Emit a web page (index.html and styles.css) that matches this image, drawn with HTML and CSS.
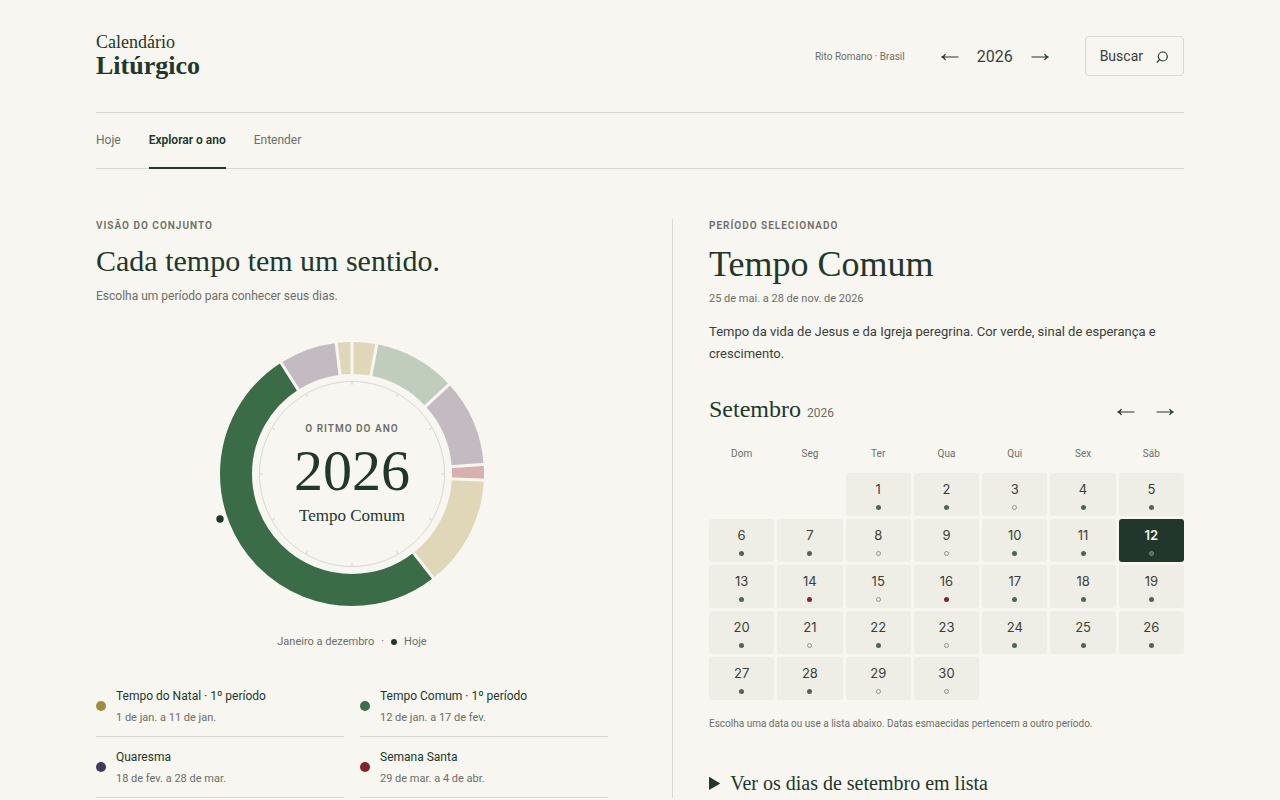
FILE: index.html
```html
<!DOCTYPE html>
<html lang="pt-BR">
<head>
<meta charset="utf-8">
<meta name="viewport" content="width=device-width, initial-scale=1">
<title>Calendário Litúrgico</title>
<link rel="stylesheet" href="styles.css">
</head>
<body>
<div class="shell">
  <header class="header">
    <a class="brand" href="#"><span class="brand-top">Calendário</span><span class="brand-main">Litúrgico</span></a>
    <div class="tools">
      <span class="rite">Rito Romano · Brasil</span>
      <div class="year">
        <button class="arrow" type="button" aria-label="Ano anterior"><svg class="arrow-icon" viewBox="0 0 18 12"><path d="M17.500 7H2M4.500 4Q3.500 6 1 7Q3.500 8 4.500 10"/></svg></button>
        <span class="year-value">2026</span>
        <button class="arrow" type="button" aria-label="Próximo ano"><svg class="arrow-icon" viewBox="0 0 18 12"><path d="M0.500 7H16M13.500 4Q14.500 6 17 7Q14.500 8 13.500 10"/></svg></button>
      </div>
      <button class="search" type="button">Buscar
        <svg class="search-icon" viewBox="0 0 14 14"><circle cx="7.800" cy="7.500" r="4.500"/><path d="M4.600 10.700L1.800 13.500"/></svg>
      </button>
    </div>
  </header>
  <nav class="nav">
    <a class="nav-link" href="#">Hoje</a>
    <a class="nav-link nav-active" href="#" aria-current="page">Explorar o ano</a>
    <a class="nav-link" href="#">Entender</a>
  </nav>
  <main class="main">
    <section class="overview">
      <p class="eyebrow">Visão do conjunto</p>
      <h1 class="title">Cada tempo tem um sentido.</h1>
      <p class="lead">Escolha um período para conhecer seus dias.</p>
      <div class="wheel">
        <svg class="wheel-svg" viewBox="-144 -144 288 288" aria-hidden="true">
          <g class="ring" transform="rotate(-90)">
            <circle class="gold" r="116" pathLength="365" stroke-dasharray="11 354"/>
            <circle class="sage" r="116" pathLength="365" stroke-dasharray="37 328" stroke-dashoffset="-11"/>
            <circle class="mauve" r="116" pathLength="365" stroke-dasharray="39 326" stroke-dashoffset="-48"/>
            <circle class="rose" r="116" pathLength="365" stroke-dasharray="7 358" stroke-dashoffset="-87"/>
            <circle class="gold" r="116" pathLength="365" stroke-dasharray="50 315" stroke-dashoffset="-94"/>
            <circle class="green" r="116" pathLength="365" stroke-dasharray="188 177" stroke-dashoffset="-144"/>
            <circle class="mauve" r="116" pathLength="365" stroke-dasharray="26 339" stroke-dashoffset="-332"/>
            <circle class="gold" r="116" pathLength="365" stroke-dasharray="7 358" stroke-dashoffset="-358"/>
          </g>
          <g class="gaps">
            <path d="M0-98V-134"/>
            <path d="M0-98V-134" transform="rotate(10.850)"/>
            <path d="M0-98V-134" transform="rotate(47.340)"/>
            <path d="M0-98V-134" transform="rotate(85.810)"/>
            <path d="M0-98V-134" transform="rotate(92.710)"/>
            <path d="M0-98V-134" transform="rotate(142.030)"/>
            <path d="M0-98V-134" transform="rotate(327.450)"/>
            <path d="M0-98V-134" transform="rotate(353.100)"/>
          </g>
          <circle class="dial" r="92.500"/>
          <g class="ticks">
            <path d="M0-92V-89"/>
            <path d="M0-92V-89" transform="rotate(30)"/>
            <path d="M0-92V-89" transform="rotate(60)"/>
            <path d="M0-92V-89" transform="rotate(90)"/>
            <path d="M0-92V-89" transform="rotate(120)"/>
            <path d="M0-92V-89" transform="rotate(150)"/>
            <path d="M0-92V-89" transform="rotate(180)"/>
            <path d="M0-92V-89" transform="rotate(210)"/>
            <path d="M0-92V-89" transform="rotate(240)"/>
            <path d="M0-92V-89" transform="rotate(270)"/>
            <path d="M0-92V-89" transform="rotate(300)"/>
            <path d="M0-92V-89" transform="rotate(330)"/>
          </g>
          <circle class="today" cx="-132" cy="45" r="3.700"/>
        </svg>
        <div class="wheel-text">
          <span class="eyebrow">O ritmo do ano</span>
          <span class="wheel-year">2026</span>
          <span class="wheel-season">Tempo Comum</span>
        </div>
      </div>
      <p class="wheel-note"><span>Janeiro a dezembro</span><span>·</span><span class="now-dot"></span><span>Hoje</span></p>
      <div class="seasons">
        <button class="season" type="button"><span class="dot dot-gold"></span><span class="season-text"><span class="season-name">Tempo do Natal · 1º período</span><span class="season-dates">1 de jan. a 11 de jan.</span></span></button>
        <button class="season" type="button"><span class="dot dot-green"></span><span class="season-text"><span class="season-name">Tempo Comum · 1º período</span><span class="season-dates">12 de jan. a 17 de fev.</span></span></button>
        <button class="season" type="button"><span class="dot dot-purple"></span><span class="season-text"><span class="season-name">Quaresma</span><span class="season-dates">18 de fev. a 28 de mar.</span></span></button>
        <button class="season" type="button"><span class="dot dot-red"></span><span class="season-text"><span class="season-name">Semana Santa</span><span class="season-dates">29 de mar. a 4 de abr.</span></span></button>
      </div>
    </section>
    <section class="detail">
      <p class="eyebrow">Período selecionado</p>
      <h2 class="period">Tempo Comum</h2>
      <p class="range">25 de mai. a 28 de nov. de 2026</p>
      <p class="about">Tempo da vida de Jesus e da Igreja peregrina. Cor verde, sinal de esperança e crescimento.</p>
      <div class="month">
        <h3 class="month-name">Setembro <span class="month-year">2026</span></h3>
        <div class="month-nav">
          <button class="arrow" type="button" aria-label="Mês anterior"><svg class="arrow-icon" viewBox="0 0 18 12"><path d="M17.500 7H2M4.500 4Q3.500 6 1 7Q3.500 8 4.500 10"/></svg></button>
          <button class="arrow" type="button" aria-label="Próximo mês"><svg class="arrow-icon" viewBox="0 0 18 12"><path d="M0.500 7H16M13.500 4Q14.500 6 17 7Q14.500 8 13.500 10"/></svg></button>
        </div>
      </div>
      <table class="calendar">
        <thead><tr><th>Dom</th><th>Seg</th><th>Ter</th><th>Qua</th><th>Qui</th><th>Sex</th><th>Sáb</th></tr></thead>
        <tbody>
          <tr><td></td><td></td><td><button class="day" type="button">1</button></td><td><button class="day" type="button">2</button></td><td><button class="day white" type="button">3</button></td><td><button class="day" type="button">4</button></td><td><button class="day" type="button">5</button></td></tr>
          <tr><td><button class="day" type="button">6</button></td><td><button class="day" type="button">7</button></td><td><button class="day white" type="button">8</button></td><td><button class="day white" type="button">9</button></td><td><button class="day" type="button">10</button></td><td><button class="day" type="button">11</button></td><td><button class="day selected" type="button" aria-pressed="true">12</button></td></tr>
          <tr><td><button class="day" type="button">13</button></td><td><button class="day red" type="button">14</button></td><td><button class="day white" type="button">15</button></td><td><button class="day red" type="button">16</button></td><td><button class="day" type="button">17</button></td><td><button class="day" type="button">18</button></td><td><button class="day" type="button">19</button></td></tr>
          <tr><td><button class="day" type="button">20</button></td><td><button class="day white" type="button">21</button></td><td><button class="day" type="button">22</button></td><td><button class="day white" type="button">23</button></td><td><button class="day" type="button">24</button></td><td><button class="day" type="button">25</button></td><td><button class="day" type="button">26</button></td></tr>
          <tr><td><button class="day" type="button">27</button></td><td><button class="day" type="button">28</button></td><td><button class="day white" type="button">29</button></td><td><button class="day white" type="button">30</button></td><td></td><td></td><td></td></tr>
        </tbody>
      </table>
      <p class="hint">Escolha uma data ou use a lista abaixo. Datas esmaecidas pertencem a outro período.</p>
      <details class="list"><summary class="list-title">Ver os dias de setembro em lista</summary></details>
    </section>
  </main>
</div>
</body>
</html>
```
FILE: styles.css
```css
:root {
  --bg: #f7f6f0;
  --ink: #22372c;
  --text: #3a4039;
  --muted: #6c6e67;
  --line: #dad9d0;
  --cell: #eeeee6;
  --serif: "Liberation Serif", serif;
  --sans: Roboto, sans-serif;
  --digits: Inter, sans-serif;
}
*, *::after { box-sizing: border-box; }
body {
  margin: 0;
  background: var(--bg);
  color: var(--text);
  font-family: var(--sans);
  font-size: 13px;
}
p, h1, h2, h3 { margin: 0; font-weight: 400; }
button {
  margin: 0;
  padding: 0;
  border: 0;
  background: none;
  color: inherit;
  font: inherit;
  cursor: pointer;
}
a { color: inherit; text-decoration: none; }
.shell { max-width: 1136px; margin: 0 auto; padding: 0 24px; }

.header {
  display: flex;
  justify-content: space-between;
  align-items: center;
  padding: 32px 0 32px;
  border-bottom: 1px solid var(--line);
}
.brand { display: flex; flex-direction: column; color: var(--ink); font-family: var(--serif); }
.brand-top { font-size: 18px; line-height: 20px; }
.brand-main { font-size: 26px; line-height: 28px; font-weight: 700; }
.tools { display: flex; align-items: center; gap: 36px; }
.rite { color: var(--muted); font-size: 10px; }
.year { display: flex; align-items: center; gap: 18px; }
.year-value { font-size: 16px; }
.arrow { display: flex; }
.arrow-icon { width: 18px; height: 12px; fill: none; stroke: var(--ink); stroke-width: 1.2; }
.search {
  display: flex;
  align-items: center;
  gap: 12px;
  height: 40px;
  padding: 0 14px;
  border: 1px solid var(--line);
  border-radius: 4px;
  font-size: 14px;
}
.search-icon { width: 14px; height: 14px; fill: none; stroke: var(--ink); stroke-width: 1.2; }

.nav { display: flex; gap: 28px; border-bottom: 1px solid var(--line); }
.nav-link {
  margin-bottom: -1px;
  padding: 18px 0 17px;
  border-bottom: 2px solid transparent;
  color: var(--muted);
  font-size: 12px;
  line-height: 19px;
}
.nav-active { border-color: var(--ink); color: var(--ink); font-weight: 600; }

.main { display: grid; grid-template-columns: 1fr 1fr; gap: 64px; margin-top: 50px; }
.eyebrow {
  color: var(--muted);
  font-size: 10px;
  line-height: 14px;
  font-weight: 600;
  letter-spacing: 1px;
  text-transform: uppercase;
}
.title { margin-top: 10px; color: var(--ink); font-family: var(--serif); font-size: 30px; line-height: 36px; }
.lead { margin-top: 8px; color: var(--muted); font-size: 12px; line-height: 18px; }

.wheel { display: grid; place-items: center; margin-top: 25px; }
.wheel-svg { grid-area: 1 / 1; width: 288px; height: 288px; }
.wheel-text { grid-area: 1 / 1; display: flex; flex-direction: column; align-items: center; color: var(--ink); }
.ring { fill: none; stroke-width: 32; }
.gold { stroke: #e0d7b8; }
.sage { stroke: #c0cdbd; }
.mauve { stroke: #c4bac1; }
.rose { stroke: #d9b0b0; }
.green { stroke: #3a6c48; }
.gaps { stroke: var(--bg); stroke-width: 3; }
.dial { fill: none; stroke: var(--line); }
.ticks { stroke: var(--line); }
.today { fill: var(--ink); }
.wheel-year { margin-top: 4px; font-family: var(--serif); font-size: 58px; line-height: 62px; }
.wheel-season { margin-top: 4px; font-family: var(--serif); font-size: 17px; line-height: 20px; }
.wheel-note {
  display: flex;
  justify-content: center;
  align-items: center;
  gap: 7px;
  margin-top: 16px;
  color: var(--muted);
  font-size: 11px;
  line-height: 16px;
}
.now-dot { width: 6px; height: 6px; border-radius: 50%; background: var(--ink); }

.seasons { display: grid; grid-template-columns: 1fr 1fr; column-gap: 16px; margin-top: 26px; }
.season {
  display: flex;
  align-items: center;
  gap: 10px;
  padding: 10px 0;
  border-bottom: 1px solid var(--line);
  text-align: left;
}
.dot { width: 10px; height: 10px; border-radius: 50%; }
.dot-gold { background: #a38b3b; }
.dot-green { background: #3b6d50; }
.dot-purple { background: #44385c; }
.dot-red { background: #86202f; }
.season-text { display: flex; flex-direction: column; gap: 3px; }
.season-name { color: var(--ink); font-size: 12px; line-height: 20px; }
.season-dates { color: var(--muted); font-size: 11px; line-height: 17px; }

.detail { padding-left: 36px; border-left: 1px solid var(--line); }
.period { margin-top: 11px; color: var(--ink); font-family: var(--serif); font-size: 36px; line-height: 40px; }
.range { margin-top: 7px; color: var(--muted); font-size: 11px; line-height: 16px; }
.about { margin-top: 14px; font-size: 13px; line-height: 22px; }
.month { display: flex; justify-content: space-between; align-items: center; margin-top: 30px; }
.month-name { color: var(--ink); font-family: var(--serif); font-size: 24px; line-height: 28px; }
.month-year { color: var(--muted); font-family: var(--sans); font-size: 12px; }
.month-nav { display: flex; gap: 21px; padding-right: 10px; }

.calendar { width: calc(100% + 6px); margin: 16px -3px 0; border-spacing: 3px; table-layout: fixed; }
.calendar th { padding: 0 0 8px; color: var(--muted); font-size: 10px; line-height: 16px; font-weight: 400; }
.calendar td { padding: 0; }
.day {
  display: flex;
  flex-direction: column;
  align-items: center;
  gap: 7px;
  width: 100%;
  padding: 7px 0 6px;
  border-radius: 3px;
  background: var(--cell);
  font-family: var(--digits);
  font-size: 13px;
  line-height: 18px;
}
.day::after { content: ""; width: 5px; height: 5px; border-radius: 50%; background: #4f6656; }
.white::after { border: 1px solid #8f938b; background: none; }
.red::after { background: #7d2735; }
.selected { background: var(--ink); color: #f7f6f0; font-weight: 600; }
.selected::after { border: 1px solid #7f8d83; background: #4f6656; }
.hint { margin-top: 13px; color: var(--muted); font-size: 10px; line-height: 16px; }
.list { margin-top: 39px; }
.list-title { color: var(--ink); font-family: var(--serif); font-size: 20px; line-height: 24px; }
```
